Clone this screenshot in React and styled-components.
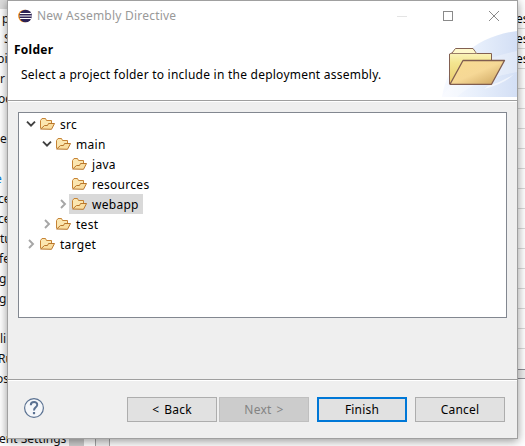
import React from "react";
import styled, { createGlobalStyle } from "styled-components";

const Global = createGlobalStyle`
  * { box-sizing: border-box; }
  html, body { margin: 0; padding: 0; overflow: hidden; }
  body { font-family: "Noto Sans", "Open Sans", sans-serif; font-size: 12px; color: #000; }
  svg { flex: none; }
`;

const Desktop = styled.div`
  position: relative;
  display: flex;
  justify-content: space-between;
  width: 525px;
  height: 446px;
  overflow: hidden;
  background: #fff;
`;

const NavColumn = styled.div`
  width: 69px;
  height: 446px;
  padding-top: 9px;
  background: linear-gradient(#dcdcdc 9px, #fff 9px);
`;

const NavLine = styled.div`
  height: 20px;
  line-height: 20px;
  text-indent: ${(p) => p.$indent}px;
  white-space: nowrap;
  color: ${(p) => (p.$link ? "#0078d7" : "#111")};
`;

const BottomStrip = styled.div`
  display: flex;
  flex: 1;
  align-self: flex-end;
  height: 10px;
`;

const Thumb = styled.div`
  width: 15px;
  background: #cdcdcd;
`;

const Divider = styled.div`
  width: 15px;
  margin-left: 11px;
  border-left: 1px solid #a5a5a5;
  border-right: 1px solid #a5a5a5;
  background: #f0f0f0;
`;

const SideTable = styled.div`
  width: 8px;
  padding-top: 9px;
`;

const SideCell = styled.div`
  height: 20px;
  line-height: 19px;
  border-bottom: 1px solid #d9d9d9;
  text-indent: -1px;
`;

const SideEnd = styled.div`
  height: 10px;
  margin-top: 20px;
  border-top: 1px solid #8c8c94;
  border-bottom: 1px solid #8c8c94;
  background: #eee;
`;

const Dialog = styled.section`
  position: absolute;
  left: 7px;
  top: 0;
  width: 511px;
  height: 439px;
  display: flex;
  flex-direction: column;
  border: 1px solid #a0a0a0;
  background: #efefef;
  box-shadow: 0 2px 9px rgba(0, 0, 0, 0.42);
`;

const TitleBar = styled.header`
  display: flex;
  align-items: center;
  height: 29px;
  flex: none;
  padding-left: 10px;
  background: #fff;
`;

const TitleText = styled.span`
  flex: 1;
  margin-left: 5px;
  color: #999;
  letter-spacing: 0.22px;
  white-space: nowrap;
`;

const WindowButton = styled.span`
  display: flex;
  flex: none;
  align-items: center;
  justify-content: center;
  width: 46px;
  height: 28px;
`;

const Banner = styled.div`
  display: flex;
  justify-content: space-between;
  flex: none;
  height: 70px;
  background: #fff;
`;

const BannerCopy = styled.div`
  padding: 10px 0 0 6px;
`;

const Heading = styled.h1`
  margin: 0;
  font-size: 12px;
  line-height: 20px;
  font-weight: 700;
  letter-spacing: 0.25px;
`;

const Message = styled.p`
  margin: 5px 0 0 7px;
  line-height: 20px;
  letter-spacing: 0.24px;
  white-space: nowrap;
`;

const Rule = styled.div`
  flex: none;
  height: 2px;
  border-top: 1px solid #9f9f9f;
  background: #fff;
`;

const Tree = styled.div`
  flex: none;
  height: 206px;
  margin: 10px 10px 61px;
  padding-top: 1px;
  border: 1px solid #828790;
  background: #fff;
`;

const TreeRow = styled.div`
  display: flex;
  align-items: center;
  height: 20px;
  padding-left: ${(p) => 5 + p.$depth * 16}px;
`;

const Toggle = styled.span`
  display: flex;
  align-items: center;
  justify-content: center;
  width: 13px;
  height: 20px;
`;

const TreeLabel = styled.span`
  display: flex;
  align-items: center;
  height: 20px;
  padding: 0 4px 0 2px;
  background: ${(p) => (p.$selected ? "#d9d9d9" : "transparent")};
  letter-spacing: 0.28px;
`;

const TreeName = styled.span`
  margin-left: 5px;
`;

const Footer = styled.footer`
  display: flex;
  align-items: flex-start;
  flex: 1;
  padding: 16px 12px 0 15px;
`;

const Spacer = styled.div`
  flex: 1;
`;

const Button = styled.button`
  width: 90px;
  height: 25px;
  padding: 0;
  margin-left: ${(p) => p.$gap || 0}px;
  font: inherit;
  letter-spacing: 0.2px;
  word-spacing: 1.8px;
  color: ${(p) => (p.disabled ? "#838383" : "#000")};
  background: ${(p) => (p.disabled ? "#ccc" : "#e1e1e1")};
  border: ${(p) => (p.$primary ? "2px solid #0078d7" : p.disabled ? "1px solid #bfbfbf" : "1px solid #adadad")};
`;

const EclipseIcon = () => (
  <svg width="14" height="14" viewBox="0 0 14 14">
    <circle cx="6.4" cy="7" r="6.3" fill="#f7941e" />
    <circle cx="7.6" cy="7" r="6.3" fill="#2c2255" />
    <path d="M2 4.5h11.3M1.4 7h12.4M2 9.5h11.3" stroke="#fff" strokeWidth="1" />
  </svg>
);

const FolderIcon = () => (
  <svg width="16" height="14" viewBox="0 0 16 14">
    <path d="M1.5 11.5V3.5L3 1.5H6.5L7.5 3.5H12.5V6.5" fill="#fbe6b0" stroke="#c68335" />
    <path d="M1.7 12L5.5 8.5H8.5L9.5 6.5H15.5L12.5 12.3Z" fill="#f9dda0" stroke="#b9762b" strokeLinejoin="round" />
  </svg>
);

const BannerArt = () => (
  <svg width="75" height="70" viewBox="442 30 75 70">
    <defs>
      <linearGradient id="sky" x1="0" x2="1">
        <stop offset="0" stopColor="#f8faff" />
        <stop offset=".5" stopColor="#e6eefb" />
        <stop offset="1" stopColor="#d3dff5" />
      </linearGradient>
      <linearGradient id="back" x1="0" x2="0" y1="0" y2="1">
        <stop offset="0" stopColor="#fffbd0" />
        <stop offset=".4" stopColor="#f3e590" />
        <stop offset="1" stopColor="#eacb6c" />
      </linearGradient>
      <linearGradient id="front" x1="0" x2="1" y1="0" y2="1">
        <stop offset="0" stopColor="#f9dc91" />
        <stop offset=".5" stopColor="#f6d896" />
        <stop offset="1" stopColor="#c9a05a" />
      </linearGradient>
    </defs>
    <path d="M442 97C447 61 477 36 517 31V97Z" fill="url(#sky)" />
    <path d="M442 97C463 66 489 57 517 51V72C491 77 472 83 457 97Z" fill="#fff" opacity=".28" />
    <path d="M488 86Q502 82 514 74Q506 83 484 89Z" fill="#fff" opacity=".6" />
    <path d="M449.5 84V54L452 53L455.5 48.5H473L476.5 53.5H491.5V61" fill="url(#back)" stroke="#826052" strokeLinejoin="round" />
    <path d="M453 53L456 49H472.5L475.5 53Z" fill="#fff9cc" />
    <path d="M450 53.5H476" stroke="#9a7d67" />
    <path d="M450 84.3L463 60.5H504.5L491.5 84.3Z" fill="url(#front)" stroke="#805d50" strokeWidth="1.3" strokeLinejoin="round" />
  </svg>
);

const Chevron = ({ open }) =>
  open ? (
    <svg width="10" height="8" viewBox="0 0 10 8">
      <path d="M1 1.7L5 5.7L9 1.7" fill="none" stroke="#404040" strokeWidth="1.9" />
    </svg>
  ) : (
    <svg width="8" height="10" viewBox="0 0 8 10">
      <path d="M2 1L6 5L2 9" fill="none" stroke="#a6a6a6" strokeWidth="1.9" />
    </svg>
  );

const HelpIcon = () => (
  <svg width="22" height="22" viewBox="0 0 22 22" fill="none" stroke="#5b7292">
    <circle cx="11" cy="11" r="9.4" strokeWidth="1.2" fill="#f5f7fa" />
    <path d="M7.8 8.3C7.8 4 14.6 4.2 14.2 8C14 10.4 11 10.4 11 13.4" strokeWidth="2" />
    <path d="M11 15V17.2" strokeWidth="2.2" />
  </svg>
);

const navLines = [
  ["p", 2], ["S", 4], ["bi", -3], ["r", 0], ["oc", -2], ["", 0], ["e", 0], ["", 0],
  ["e", -5], ["ce", -2], ["ce", -2], ["tu", 0], ["fe", -1], ["g", -1], ["g", -1],
  ["", 0], ["li", 0], ["Ru", -2], ["os", -4], ["", 0], ["", 0], ["ent Settings", -1],
];
const folders = [
  { name: "src", depth: 0, open: true },
  { name: "main", depth: 1, open: true },
  { name: "java", depth: 2, leaf: true },
  { name: "resources", depth: 2, leaf: true },
  { name: "webapp", depth: 2, selected: true },
  { name: "test", depth: 1 },
  { name: "target", depth: 0 },
];
const sideCells = ["es", "es", "es", ...Array(14).fill("")];

export default function App() {
  return (
    <Desktop>
      <Global />
      <NavColumn>
        {navLines.map(([text, indent], i) => (
          <NavLine key={i} $indent={indent} $link={i === 8}>{text}</NavLine>
        ))}
      </NavColumn>
      <BottomStrip>
        <Thumb />
        <Divider />
      </BottomStrip>
      <SideTable>
        {sideCells.map((t, i) => (
          <SideCell key={i}>{t}</SideCell>
        ))}
        <SideEnd />
      </SideTable>
      <Dialog>
        <TitleBar>
          <EclipseIcon />
          <TitleText>New Assembly Directive</TitleText>
          <WindowButton>
            <svg width="10" height="10"><path d="M0 5.5H10" stroke="#e4e4e4" /></svg>
          </WindowButton>
          <WindowButton>
            <svg width="10" height="10"><rect x=".5" y=".5" width="9" height="9" fill="none" stroke="#8a8a8a" /></svg>
          </WindowButton>
          <WindowButton>
            <svg width="10" height="10"><path d="M0 0L10 10M10 0L0 10" stroke="#8a8a8a" /></svg>
          </WindowButton>
        </TitleBar>
        <Banner>
          <BannerCopy>
            <Heading>Folder</Heading>
            <Message>Select a project folder to include in the deployment assembly.</Message>
          </BannerCopy>
          <BannerArt />
        </Banner>
        <Rule />
        <Tree>
          {folders.map((f) => (
            <TreeRow key={f.name} $depth={f.depth}>
              <Toggle>{!f.leaf && <Chevron open={f.open} />}</Toggle>
              <TreeLabel $selected={f.selected}>
                <FolderIcon />
                <TreeName>{f.name}</TreeName>
              </TreeLabel>
            </TreeRow>
          ))}
        </Tree>
        <Rule />
        <Footer>
          <HelpIcon />
          <Spacer />
          <Button>&lt; Back</Button>
          <Button $gap={2} disabled>Next &gt;</Button>
          <Button $gap={8} $primary>Finish</Button>
          <Button $gap={8}>Cancel</Button>
        </Footer>
      </Dialog>
    </Desktop>
  );
}
